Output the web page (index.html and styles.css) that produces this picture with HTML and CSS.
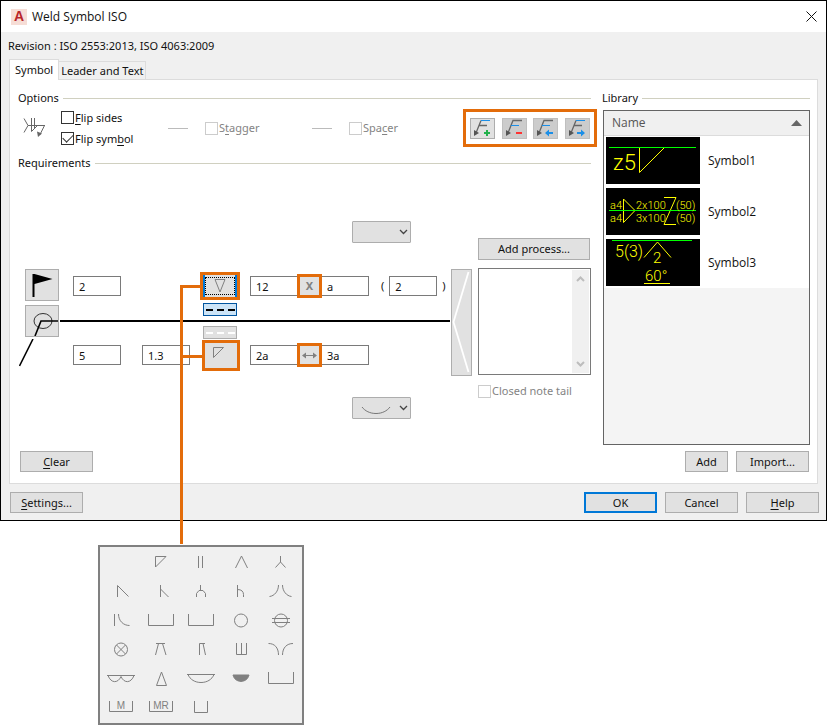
FILE: index.html
```html
<!DOCTYPE html>
<html lang="en">
<head>
<meta charset="utf-8">
<title>Weld Symbol ISO</title>
<link rel="stylesheet" href="styles.css">
</head>
<body>
<main class="dialog">
  <header class="titlebar">
    <svg class="app-icon" width="16" height="16" viewBox="0 0 16 16" aria-hidden="true"><rect width="16" height="16" fill="#f6ddd6"/><text x="8" y="12" class="logo-letter">A</text></svg>
    <h1 class="title">Weld Symbol ISO</h1>
    <button class="close" type="button" aria-label="Close"><svg width="11" height="11" viewBox="0 0 11 11"><path d="M.5.5l10 10M10.500.5l-10 10" stroke="#111" fill="none"/></svg></button>
  </header>
  <p class="revision">Revision : ISO 2553:2013, ISO 4063:2009</p>
  <nav class="tabs" role="tablist">
    <button class="tab tab-active" type="button" role="tab" aria-selected="true">Symbol</button>
    <button class="tab" type="button" role="tab" aria-selected="false">Leader and Text</button>
  </nav>
  <section class="panel">
    <div class="columns">
      <div class="main">
        <h2 class="legend">Options</h2>
        <div class="options">
          <svg class="weld-icon" width="23" height="20" viewBox="0 0 23 20" fill="none" stroke="#666" aria-hidden="true"><path d="M1 .5L5 7.500 1 14.500M5 7.500h17M8.500 0v13.500M11.500 0v10M8.500 13.500l6-6M21.500 7.500l-4.500 9"/><path d="M14 13.500l5 2-4 3.500z" fill="#666" stroke="none"/></svg>
          <div class="flips">
            <label class="check"><input type="checkbox"><span><u>F</u>lip sides</span></label>
            <label class="check"><input type="checkbox" checked><span>Flip sym<u>b</u>ol</span></label>
          </div>
          <div class="optional"><i class="dash"></i><label class="check check-off"><input type="checkbox" disabled><span>S<u>t</u>agger</span></label></div>
          <div class="optional"><i class="dash"></i><label class="check check-off"><input type="checkbox" disabled><span>Spa<u>c</u>er</span></label></div>
          <div class="toolbar">
            <button class="tool tool-on" type="button" aria-label="Add leader"><svg width="23" height="19" viewBox="1 1 23 19" fill="none"><path d="M11 2.500L6 15M9 7.500h8" stroke="#666" stroke-width="1.300"/><path d="M4 12l5 3-5 3z" fill="#555"/><path d="M11 2.500h9" stroke="#1b8fe8"/><path d="M17 12v6M14 15h6" stroke="#22b14c" stroke-width="2"/></svg></button>
            <button class="tool" type="button" aria-label="Remove leader"><svg width="23" height="19" viewBox="1 1 23 19" fill="none"><path d="M20 2.500h-9L6 15" stroke="#666" stroke-width="1.300"/><path d="M4 12l5 3-5 3z" fill="#555"/><path d="M9 7.500h8" stroke="#1b8fe8"/><path d="M14 15h6" stroke="#f33" stroke-width="2"/></svg></button>
            <button class="tool" type="button" aria-label="Previous leader"><svg width="23" height="19" viewBox="1 1 23 19" fill="none"><path d="M20 2.500h-9L6 15" stroke="#666" stroke-width="1.300"/><path d="M4 12l5 3-5 3z" fill="#555"/><path d="M9 7.500h8" stroke="#1b8fe8"/><path d="M12 15l4-3.500V14h4v2h-4v2.500z" fill="#1b8fe8"/></svg></button>
            <button class="tool" type="button" aria-label="Next leader"><svg width="23" height="19" viewBox="1 1 23 19" fill="none"><path d="M11 2.500L6 15M9 7.500h8" stroke="#666" stroke-width="1.300"/><path d="M4 12l5 3-5 3z" fill="#555"/><path d="M11 2.500h9" stroke="#1b8fe8"/><path d="M20 15l-4-3.500V14h-4v2h4v2.500z" fill="#1b8fe8"/></svg></button>
          </div>
        </div>
        <h2 class="legend">Requirements</h2>
        <div class="requirements">
          <div class="diagram">
            <div class="contour contour-top"><select aria-label="Upper contour"><option></option></select><svg class="chevron" width="9" height="6" viewBox="0 0 9 6"><path d="M1 1l3.500 3.500L8 1" fill="none" stroke="#444" stroke-width="1.300"/></svg></div>

            <button class="node flag" type="button" aria-label="Field weld"><svg width="32" height="30" viewBox="0 0 32 30"><path d="M6.500 4h2l18 5-18 5v13h-2z" fill="#000"/></svg></button>
            <input class="field upper col-2" aria-label="Upper size" value="2">
            <div class="slot upper"><button class="symbol symbol-focus" type="button" aria-label="Upper symbol"><svg width="14" height="16" viewBox="0 0 14 16"><path d="M2 1.500h10L7 14z" fill="none" stroke="#808080"/></svg></button><i class="callout"></i></div>
            <div class="run upper"><input class="field" aria-label="Upper count" value="12"><button class="mark mark-x" type="button">X</button><input class="field" aria-label="Upper length" value="a"></div>
            <div class="pitch upper"><span>(</span><input class="field" aria-label="Upper pitch" value="2"><span>)</span></div>

            <i class="weld-line"></i>
            <button class="node around" type="button" aria-label="Weld all around"><svg width="32" height="30" viewBox="0 0 32 30" fill="none" stroke="#000"><ellipse cx="17" cy="15" rx="9" ry="7.500" stroke="#333"/><path d="M32 15H15L9 30" stroke-width="1.600"/></svg></button>
            <div class="identification"><button class="ident ident-on" type="button" aria-label="Identification line above"><i></i><i></i><i></i></button><button class="ident" type="button" aria-label="Identification line below"><i></i><i></i><i></i></button></div>

            <svg class="leader-leg" width="15" height="28" viewBox="0 0 15 28"><path d="M14 0L.500 27" fill="none" stroke="#000" stroke-width="1.600"/></svg>
            <input class="field lower col-2" aria-label="Lower size" value="5">
            <input class="field lower col-3" aria-label="Lower depth" value="1.3">
            <div class="slot lower"><button class="symbol symbol-lower" type="button" aria-label="Lower symbol"><svg width="14" height="14" viewBox="0 0 14 14"><path d="M1.500 1.500h10l-10 10z" fill="none" stroke="#808080"/></svg></button><i class="branch"></i></div>
            <div class="run lower"><input class="field" aria-label="Lower count" value="2a"><button class="mark" type="button" aria-label="Distance"><svg width="15" height="7" viewBox="0 0 15 7"><path d="M2 3.500h11" stroke="#808080"/><path d="M0 3.500L4 .500v6zM15 3.500l-4-3v6z" fill="#808080"/></svg></button><input class="field" aria-label="Lower length" value="3a"></div>

            <div class="contour contour-bottom"><select aria-label="Lower contour"><option></option></select><svg class="arc" width="30" height="9" viewBox="0 0 30 9"><path d="M1 1c3 4 8 6.500 14 6.500S26 5 29 1" fill="none" stroke="#777"/></svg><svg class="chevron" width="9" height="6" viewBox="0 0 9 6"><path d="M1 1l3.500 3.500L8 1" fill="none" stroke="#444" stroke-width="1.300"/></svg></div>
          </div>
          <button class="tail" type="button" aria-label="Tail"><svg width="19" height="105" viewBox="0 0 19 105"><path d="M16.500 2L1.500 52l15 50" fill="none" stroke="#fff" stroke-width="1.800"/></svg></button>
          <div class="notes">
            <button class="button process" type="button">Add process...</button>
            <div class="note-box"><textarea aria-label="Notes"></textarea><div class="scroll"><svg width="9" height="6" viewBox="0 0 9 6"><path d="M1 5l3.500-3.500L8 5" fill="none" stroke="#bdbdbd" stroke-width="2"/></svg><svg width="9" height="6" viewBox="0 0 9 6"><path d="M1 1l3.500 3.500L8 1" fill="none" stroke="#bdbdbd" stroke-width="2"/></svg></div></div>
            <label class="check check-off"><input type="checkbox" disabled><span>Closed note tail</span></label>
          </div>
        </div>
      </div>
      <div class="library">
        <h2 class="legend">Library</h2>
        <div class="list">
          <table>
            <thead><tr><th colspan="2" scope="col"><div class="name-head">Name<svg width="11" height="6" viewBox="0 0 11 6"><path d="M0 6l5.500-6L11 6z" fill="#666"/></svg></div></th></tr></thead>
            <tbody>
              <tr><td class="thumb"><svg width="94" height="47" viewBox="0 0 94 47"><rect width="94" height="47"/><path d="M33.500 10.500v25l25-25" class="y"/><path d="M3 10.500h87" class="g"/><text x="7" y="33" font-size="22">z5</text></svg></td><td>Symbol1</td></tr>
              <tr><td class="thumb"><svg width="94" height="47" viewBox="0 0 94 47"><rect width="94" height="47"/><path d="M17.500 11v23.500L29 22.500zM58 9.500h12L58 36.500h12" class="y"/><path d="M3 22.500h87" class="g"/><g font-size="11"><text x="4" y="21">a4</text><text x="30" y="21">2x100</text><text x="70" y="21">(50)</text><text x="4" y="34">a4</text><text x="30" y="34">3x100</text><text x="70" y="34">(50)</text></g></svg></td><td>Symbol2</td></tr>
              <tr><td class="thumb"><svg width="94" height="47" viewBox="0 0 94 47"><rect width="94" height="47"/><path d="M38 18.500L51.500 3 65 18.500M38 44.500h26" class="y"/><path d="M6 1.500h80" class="g"/><g font-size="16"><text x="9" y="18">5(3)</text></g><g font-size="15"><text x="47" y="24">2</text><text x="39" y="42">60°</text></g></svg></td><td>Symbol3</td></tr>
            </tbody>
          </table>
        </div>
      </div>
    </div>
    <div class="panel-actions">
      <button class="button" type="button"><u>C</u>lear</button>
      <button class="button small push" type="button">Add</button>
      <button class="button" type="button">Import...</button>
    </div>
  </section>
  <footer class="footer">
    <button class="button" type="button"><u>S</u>ettings...</button>
    <button class="button primary push" type="button">OK</button>
    <button class="button" type="button">Cancel</button>
    <button class="button" type="button"><u>H</u>elp</button>
  </footer>
</main>
<div class="palette" role="group" aria-label="Weld symbols">
  <button type="button" aria-label="None"><svg viewBox="0 0 40 29"></svg></button>
  <button type="button" aria-label="Fillet"><svg viewBox="0 0 40 29"><path d="M14.500 8.500h10.500l-10.500 10.500z"/></svg></button>
  <button type="button" aria-label="Square"><svg viewBox="0 0 40 29"><path d="M17.500 8v12M21.500 8v12"/></svg></button>
  <button type="button" aria-label="V"><svg viewBox="0 0 40 29"><path d="M14.500 20l6-12 6 12"/></svg></button>
  <button type="button" aria-label="Y"><svg viewBox="0 0 40 29"><path d="M19.500 8v6l-5 5.500M19.500 14l5 5.500"/></svg></button>

  <button type="button" aria-label="Bevel"><svg viewBox="0 0 40 29"><path d="M16.500 20V8.500l11 11"/></svg></button>
  <button type="button" aria-label="Broad bevel"><svg viewBox="0 0 40 29"><path d="M19.500 8v12M19.500 12l8 8"/></svg></button>
  <button type="button" aria-label="U"><svg viewBox="0 0 40 29"><path d="M19.500 8v5.500M15.500 20v-3.500l2.500-3h4l2.500 3V20"/></svg></button>
  <button type="button" aria-label="J"><svg viewBox="0 0 40 29"><path d="M16.500 8v12M16.500 12.500c4 0 6 2 6 5V20"/></svg></button>
  <button type="button" aria-label="Flare V"><svg viewBox="0 0 40 29"><path d="M17.500 8c0 6-4 11-9 11.500M21.500 8c0 6 4 11 9 11.500"/></svg></button>

  <button type="button" aria-label="Flare bevel"><svg viewBox="0 0 40 29"><path d="M13.500 8v12M17.500 8c0 7 5 11.500 11 11.500"/></svg></button>
  <button type="button" aria-label="Plug"><svg viewBox="0 0 40 29"><path d="M7.500 8v11.500h25V8"/></svg></button>
  <button type="button" aria-label="Slot"><svg viewBox="0 0 40 29"><path d="M7.500 8v11.500h25V8"/></svg></button>
  <button type="button" aria-label="Spot"><svg viewBox="0 0 40 29"><circle cx="20" cy="14.500" r="6.500"/></svg></button>
  <button type="button" aria-label="Seam"><svg viewBox="0 0 40 29"><circle cx="20" cy="14.500" r="6.500"/><path d="M11 12.500h18M11 16.500h18"/></svg></button>

  <button type="button" aria-label="Stud"><svg viewBox="0 0 40 29"><circle cx="20" cy="14.500" r="6.500"/><path d="M15.500 10l9 9M24.500 10l-9 9"/></svg></button>
  <button type="button" aria-label="Steep V"><svg viewBox="0 0 40 29"><path d="M15 8.500h9M17.500 8.500L14.500 20M21.500 8.500l3.500 11.500"/></svg></button>
  <button type="button" aria-label="Steep bevel"><svg viewBox="0 0 40 29"><path d="M18.500 20V8.500H24M22 8.500L24.500 20"/></svg></button>
  <button type="button" aria-label="Edge"><svg viewBox="0 0 40 29"><path d="M15.500 8v11.500h10V8M20.500 8v11.500"/></svg></button>
  <button type="button" aria-label="Flared edge"><svg viewBox="0 0 40 29"><path d="M7.500 8.500c6 0 10 4 10 11.500M32 8.500c-6 0-10.500 4-10.500 11.500"/></svg></button>

  <button type="button" aria-label="Backing run"><svg viewBox="0 0 40 29"><path d="M6 11.500h28M7 11.500c3 8 10 8 13 1 3 7 10 7 13-1"/></svg></button>
  <button type="button" aria-label="Steep"><svg viewBox="0 0 40 29"><path d="M20.500 8l-5 13.500h10z"/></svg></button>
  <button type="button" aria-label="Surfacing"><svg viewBox="0 0 40 29"><path d="M6 10.500h28M7 10.500c2 5 7 8 13 8s11-3 13-8"/></svg></button>
  <button type="button" aria-label="Backing"><svg viewBox="0 0 40 29"><path d="M12 11h16c-2 8.500-14 8.500-16 0z" class="solid"/></svg></button>
  <button type="button" aria-label="Permanent backing"><svg viewBox="0 0 40 29"><path d="M7.500 8v11.500h25V8"/></svg></button>

  <button type="button" aria-label="Backing M"><svg viewBox="0 0 40 29"><path d="M8.500 8v10.500h23V8"/><text x="20" y="16">M</text></svg></button>
  <button type="button" aria-label="Backing MR"><svg viewBox="0 0 40 29"><path d="M8.500 8v10.500h23V8"/><text x="20" y="16">MR</text></svg></button>
  <button type="button" aria-label="Plug narrow"><svg viewBox="0 0 40 29"><path d="M13.500 8v11.500h13V8"/></svg></button>
</div>
</body>
</html>
```
FILE: styles.css
```css
* { box-sizing: border-box; }

body {
  margin: 0;
  background: #fff;
  color: #111;
  font: 11px/16px "Noto Sans", "Open Sans", sans-serif;
}

button, input, select, textarea { font: inherit; color: inherit; margin: 0; }
button { padding: 0; }
svg { display: block; flex: none; }
u { text-underline-offset: 2px; }

.dialog { border: 1px solid #000; background: #f0f0f0; }

.titlebar {
  display: flex;
  align-items: center;
  height: 31px;
  padding: 0 9px 0 10px;
  background: #fff;
}
.logo-letter { font: bold 14px "Liberation Sans", sans-serif; fill: #b8252a; text-anchor: middle; }
.title { margin: 0 0 0 5px; font: 12px/16px "Open Sans", sans-serif; }
.close { margin-left: auto; border: 0; background: none; }

.revision { margin: 6px 7px 5px; }

.tabs { display: flex; align-items: flex-end; padding-left: 8px; }
.tab {
  height: 18px;
  padding: 0 2px;
  border: 1px solid #dcdcdc;
  border-width: 1px 1px 0 0;
  background: #f0f0f0;
}
.tab-active {
  position: relative;
  height: 21px;
  margin-bottom: -1px;
  padding: 0 5px;
  border-left-width: 1px;
  background: #fff;
}

.panel { margin: 0 8px; padding: 10px 7px 11px 8px; border: 1px solid #dcdcdc; background: #fff; }
.columns { display: grid; grid-template-columns: 1fr 208px; gap: 11px; }
.main { min-width: 0; }

.legend { display: flex; align-items: center; gap: 4px; margin: 0; font: inherit; }
.legend::after { content: ""; flex: 1; height: 1px; background: #d0d0c0; }

.options { display: flex; align-items: center; height: 38px; margin: 3px -6px 8px 0; padding-left: 5px; }
.weld-icon { margin-right: 15px; }
.flips { display: grid; gap: 5px; width: 107px; }
.optional { display: flex; align-items: center; gap: 17px; width: 144px; }
.dash { width: 20px; height: 1px; background: #bbb; }

.check { display: flex; align-items: center; gap: 1px; }
.check span { white-space: nowrap; }
.flips .check { height: 16px; }
.check-off { color: #838383; }
.check input {
  flex: none;
  appearance: none;
  display: grid;
  place-items: center;
  width: 13px;
  height: 13px;
  border: 1px solid #333;
  background: #fff;
}
.check-off input { border-color: #ccc; }
.check input:checked::before {
  content: "";
  width: 9px;
  height: 5px;
  margin-bottom: 3px;
  border: solid #333;
  border-width: 0 0 1px 1px;
  transform: rotate(-45deg);
}

.toolbar {
  display: flex;
  align-items: center;
  justify-content: space-between;
  width: 134px;
  height: 38px;
  margin-left: auto;
  padding: 0 4px;
  border: 3px solid #e36c0a;
}
.tool { width: 25px; height: 21px; border: 1px solid #bfbfbf; background: #ccc; }
.tool-on { border-color: #adadad; background: #e1e1e1; }

.requirements { display: flex; align-items: flex-start; padding: 50px 0 26px 1px; }
.diagram {
  flex: 1;
  display: grid;
  grid-template-columns: 54px 69px 58px 50px 131px 1fr;
  grid-template-rows: 48px 34px 36px 32px 48px;
  align-items: center;
  justify-items: start;
}
.upper { grid-row: 2; }
.lower { grid-row: 4; }
.col-2 { grid-column: 2; }
.col-3 { grid-column: 3; }

.node {
  grid-column: 1;
  width: 34px;
  height: 32px;
  margin-left: 6px;
  border: 1px solid #adadad;
  background: #e1e1e1;
}
.flag { grid-row: 2; align-self: start; }
.around { grid-row: 3; }
.leader-leg { grid-area: 4 / 1; align-self: start; }
.weld-line { grid-area: 3 / 1 / 4 / -1; justify-self: stretch; height: 2px; margin-left: 41px; background: #000; }

.field { width: 48px; height: 20px; padding: 0 5px; border: 1px solid #7a7a7a; border-radius: 0; background: #fff; }
.run { grid-column: 5; display: flex; align-items: center; }
.mark {
  position: relative;
  display: grid;
  place-items: center;
  width: 25px;
  height: 24px;
  margin: 0 -1px;
  border: 3px solid #e36c0a;
  background: #e1e1e1;
}
.mark-x { color: #808080; font-weight: bold; }
.pitch { grid-column: 6; display: flex; align-items: center; gap: 5px; }

.slot { grid-column: 4; position: relative; }
.symbol {
  display: grid;
  place-items: center;
  width: 40px;
  height: 28px;
  border: 3px solid #e36c0a;
  background: #e1e1e1;
}
.symbol-focus { box-shadow: inset 2px 0 #0078d7, inset -2px 0 #0078d7; outline: 1px dotted #000; outline-offset: -6px; }
.symbol-lower { width: 38px; height: 31px; margin-left: 2px; padding: 0 4px 4px 0; }
.callout {
  position: absolute;
  top: 13px;
  left: -20px;
  width: 20px;
  height: 259px;
  border: solid #e36c0a;
  border-width: 3px 0 0 3px;
}
.branch { position: absolute; top: 15px; left: -20px; width: 23px; height: 3px; background: #e36c0a; }

.identification { grid-area: 3 / 4; display: grid; gap: 10px; margin-left: 3px; }
.ident {
  display: flex;
  align-items: center;
  justify-content: center;
  gap: 4px;
  width: 34px;
  height: 13px;
  border: 1px solid #adadad;
  background: #e1e1e1;
  color: #fff;
}
.ident i { width: 7px; height: 2px; background: currentColor; }
.ident-on { border-color: #00549f; background: #cce4f7; color: #000; }

.contour { grid-column: 5 / 7; position: relative; margin-left: 102px; }
.contour select {
  display: block;
  appearance: none;
  width: 59px;
  height: 22px;
  border: 1px solid #adadad;
  border-radius: 1px;
  background: #e1e1e1;
}
.contour svg { position: absolute; pointer-events: none; }
.chevron { top: 8px; right: 3px; }
.arc { top: 9px; left: 9px; }
.contour-top { grid-row: 1; align-self: start; }
.contour-bottom { grid-row: 5; align-self: end; }

.tail { width: 21px; height: 107px; margin: 48px 6px 0 1px; border: 1px solid #adadad; background: #e1e1e1; }
.notes { width: 113px; margin-top: 17px; }
.note-box { display: flex; height: 107px; margin: 8px 0; padding: 1px; border: 1px solid #7a7a7a; background: #fff; }
.note-box textarea { flex: 1; min-width: 0; border: 0; resize: none; }
.scroll { display: flex; flex-direction: column; align-items: center; justify-content: space-between; width: 17px; padding: 6px 0; background: #f0f0f0; }

.button { width: 73px; height: 21px; border: 1px solid #adadad; background: #e1e1e1; }
.process { width: 112px; height: 22px; margin-left: 0; }
.small { width: 43px; }
.primary { border: 2px solid #0078d7; }
.push { margin-left: auto; }

.library { display: flex; flex-direction: column; }
.list { flex: 1; margin: 4px 0 0 1px; border: 1px solid #646464; background: #f4f4f4; }
table { width: 100%; border-collapse: collapse; background: #fff; font: 12px/16px "Open Sans", sans-serif; }
th { height: 24px; padding: 0 7px 0 8px; border-bottom: 1px solid #dcdcdc; background: #f0f0f0; color: #555; font-weight: normal; text-align: left; }
.name-head { display: flex; align-items: center; justify-content: space-between; }
td { height: 51px; padding: 0; }
.thumb { width: 104px; padding-left: 2px; }
.thumb text { font-family: Roboto, sans-serif; font-weight: 300; fill: #ff0; }
.y { fill: none; stroke: #ff0; }
.g { fill: none; stroke: #0f0; }

.panel-actions { display: flex; gap: 8px; margin: 6px 1px 0 2px; }
.footer { display: flex; gap: 8px; padding: 8px 7px 7px 9px; }

.palette {
  display: grid;
  grid-template-columns: repeat(5, 40px);
  grid-auto-rows: 29px;
  width: max-content;
  margin: 24px 0 0 98px;
  padding: 1px;
  border: 2px solid #808080;
  background: #f0f0f0;
}
.palette button { border: 0; background: none; }
.palette svg { width: 40px; height: 29px; fill: none; stroke: #808080; }
.palette text { font: 10px "Liberation Sans", sans-serif; fill: #808080; stroke: none; text-anchor: middle; }
.palette .solid { fill: #808080; }
```
